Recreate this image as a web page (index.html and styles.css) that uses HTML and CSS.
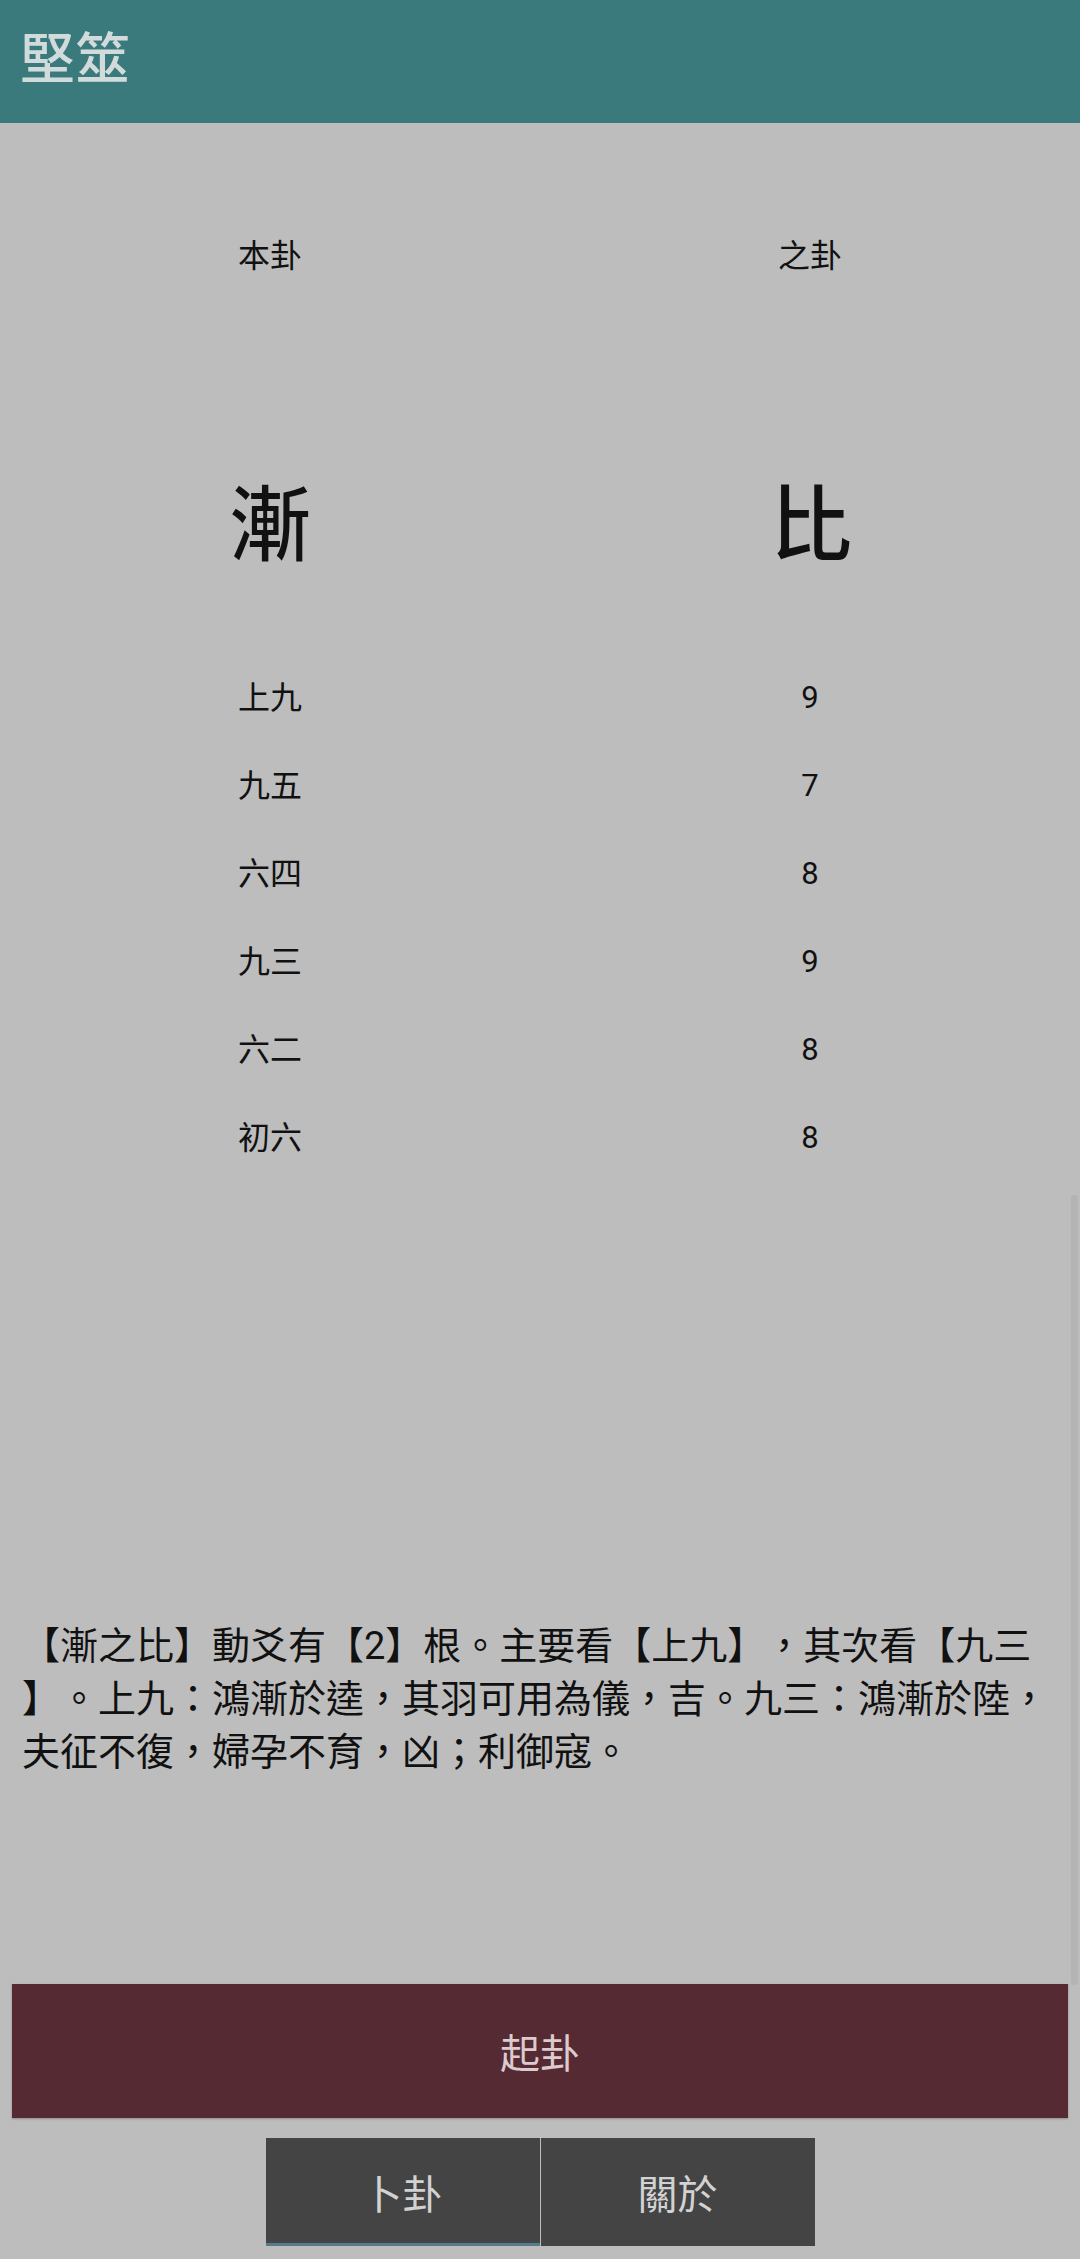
FILE: index.html
```html
<!DOCTYPE html>
<html lang="zh-Hant">
<head>
<meta charset="utf-8">
<title>堅筮</title>
<link rel="stylesheet" href="styles.css">
</head>
<body>
<header class="appbar"><h1 class="title">堅筮</h1></header>
<main class="content">
  <div class="gua-grid">
    <div class="label">本卦</div><div class="label">之卦</div>
    <div class="big">漸</div><div class="big">比</div>
    <div class="line">上九</div><div class="line num">9</div>
    <div class="line">九五</div><div class="line num">7</div>
    <div class="line">六四</div><div class="line num">8</div>
    <div class="line">九三</div><div class="line num">9</div>
    <div class="line">六二</div><div class="line num">8</div>
    <div class="line">初六</div><div class="line num">8</div>
  </div>
  <p class="reading">【漸之比】動爻有【2】根。主要看【上九】，其次看【九三】。上九：鴻漸於逵，其羽可用為儀，吉。九三：鴻漸於陸，夫征不復，婦孕不育，凶；利御寇。</p>
  <div class="scroll-ind"></div>
</main>
<button class="cast">起卦</button>
<nav class="tabs">
  <div class="tab active">卜卦</div>
  <div class="tab">關於</div>
</nav>
</body>
</html>
```

FILE: styles.css
```css
html, body {
  margin: 0;
  padding: 0;
}
body {
  width: 1080px;
  height: 2259px;
  background: #bdbdbd;
  display: flex;
  flex-direction: column;
  font-family: Roboto, "Noto Sans CJK SC", "Noto Sans CJK TC", sans-serif;
  color: #111;
  overflow: hidden;
}
.appbar {
  height: 123px;
  background: #3b7a7c;
  display: flex;
  align-items: center;
  padding-left: 20px;
  box-sizing: border-box;
  flex: none;
}
.title {
  margin: 0;
  font-size: 55px;
  font-weight: 500;
  color: #d2dbdb;
  line-height: 1;
  padding-bottom: 4px;
}
.content {
  flex: 1;
  position: relative;
  display: flex;
  flex-direction: column;
}
.gua-grid {
  display: grid;
  grid-template-columns: 1fr 1fr;
  padding-top: 113px;
  justify-items: center;
}
.label {
  font-size: 32px;
  line-height: 40px;
  height: 40px;
}
.big {
  font-size: 82px;
  font-weight: 500;
  line-height: 100px;
  margin-top: 200px;
  height: 100px;
}
.line {
  font-size: 32px;
  line-height: 88px;
  height: 88px;
}
.big + .big {
  margin-left: 2px;
}
.gua-grid > .big:nth-of-type(odd) {
  margin-bottom: 78px;
}
.num {
  font-size: 31px;
}
.reading {
  margin: 438px 0 0 0;
  padding: 0 22px;
  font-size: 38px;
  line-height: 53px;
  line-break: anywhere;
  text-spacing-trim: space-all;
  color: #111;
}
.scroll-ind {
  position: absolute;
  right: 2px;
  top: 1072px;
  width: 7px;
  height: 790px;
  background: #b4b4b4;
  border-radius: 3px;
}
.cast {
  flex: none;
  margin: 0 12px;
  height: 134px;
  border: none;
  background: #552a33;
  color: #dccbce;
  font-family: "Noto Sans CJK SC", sans-serif;
  font-size: 40px;
  box-shadow: 0 1px 2px rgba(0,0,0,0.25);
  padding: 0;
}
.tabs {
  flex: none;
  display: flex;
  justify-content: center;
  gap: 1px;
  margin: 20px 0 13px;
  height: 108px;
}
.tab {
  width: 274px;
  height: 108px;
  background: #444444;
  color: #d2d2d2;
  font-family: "Noto Sans CJK SC", sans-serif;
  font-size: 40px;
  display: flex;
  align-items: center;
  justify-content: center;
  box-sizing: border-box;
}
.tab.active {
  border-bottom: 3px solid #557c8c;
  padding-top: 3px;
}
```
